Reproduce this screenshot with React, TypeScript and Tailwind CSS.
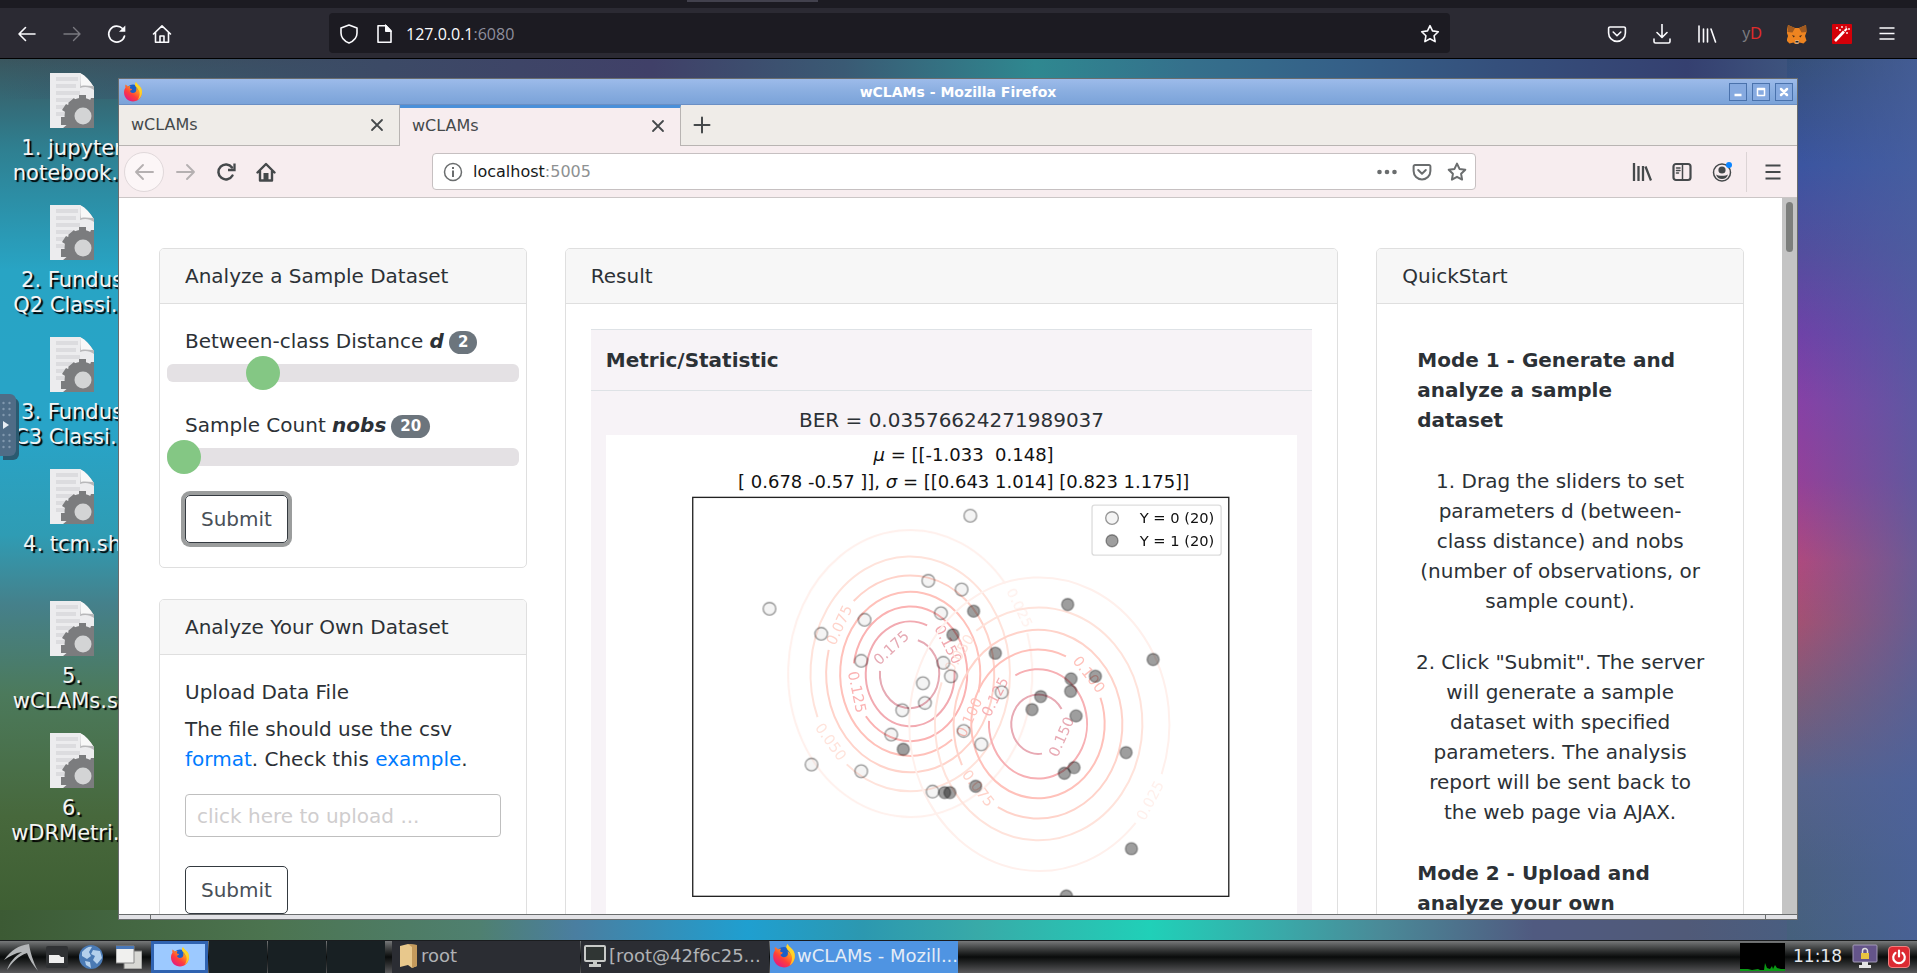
import React from "react";

type IconProps = { className?: string; children: React.ReactNode; box?: string };

function Icon({ className = "size-5", children, box = "0 0 20 20" }: IconProps) {
  return (
    <svg
      viewBox={box}
      className={className}
      fill="none"
      stroke="currentColor"
      strokeLinecap="round"
      strokeLinejoin="round"
      aria-hidden="true"
    >
      {children}
    </svg>
  );
}

const STAR = "M10 1.6l2.5 5.3 5.8.8-4.2 4.1 1 5.8-5.1-2.8-5.1 2.8 1-5.8-4.2-4.1 5.8-.8z";
const POCKET = "M3 3h14a1.4 1.4 0 0 1 1.4 1.4V9a8.4 8.4 0 0 1-16.8 0V4.4A1.4 1.4 0 0 1 3 3z";

function FirefoxLogo({ className, id }: { className: string; id: string }) {
  return (
    <svg viewBox="0 0 40 40" className={className} aria-hidden="true">
      <defs>
        <linearGradient id={id} x1="0.9" y1="0" x2="0.2" y2="1">
          <stop offset="0" stopColor="#ffe226" />
          <stop offset="0.35" stopColor="#ff9a1f" />
          <stop offset="0.65" stopColor="#ff3f3a" />
          <stop offset="1" stopColor="#e0158a" />
        </linearGradient>
      </defs>
      <circle cx="20" cy="19" r="14" fill="#1c5fc8" />
      <path
        d="M5 11c-1-3 0-6 0-6 2 1 4 3 5 4 2-1 4-1 5-1 0 1-2 3-1 5l4 1c0 2-3 3-4 4 1 4 6 5 10 3 3-2 3-6 2-9 3 1 5 4 5 8 0-8-5-10-7-14 0-3 1-4 2-6 2 6 12 8 12 20 0 11-8 19-18 19S2 31 2 21c0-4 1-7 3-10z"
        fill={`url(#${id})`}
      />
      <path d="M26 0c2 6 12 8 12 20 0 7-4 13-9 16 6-8 5-16 2-20-2-4-6-5-7-10 0-3 1-4 2-6z" fill="#ffdb29" opacity="0.85" />
    </svg>
  );
}

function FoxHead() {
  return (
    <svg viewBox="0 0 40 40" className="size-5" aria-hidden="true">
      <path d="M2 2l14 6h8l14-6 1 14-3 8 3 9-6 6-8-2-3 3h-6l-3-3-8 2-6-6 3-9-3-8z" fill="#ee8420" />
      <path d="M2 2l14 6-5 9-10-1zM38 2l-14 6 5 9 10-1z" fill="#a05a20" />
      <path d="M16 33h8l-1 6h-6z" fill="#d8c8b8" />
      <path d="M17 34h6v3h-6z" fill="#222" />
      <path d="M10 22l6 2-3 3zM30 22l-6 2 3 3z" fill="#4a2c18" />
    </svg>
  );
}

function BrowserBar() {
  return (
    <header className="shrink-0 border-b border-black bg-[#2b2a33] text-[#fbfbfe]">
      <div className="flex h-2 justify-center bg-[#1c1b22] pr-[412px]">
        <div className="h-0.5 w-[131px] bg-[#42414d]" />
      </div>
      <div className="flex h-[50px] items-center">
        <div className="flex w-[329px] shrink-0 items-center gap-[25px] pt-0.5 pl-[17px]">
          <button aria-label="Back" className="size-5">
            <Icon><path strokeWidth="1.6" d="M18 10H2M8.5 3.5L2 10l6.500 6.500" /></Icon>
          </button>
          <button aria-label="Forward" className="size-5 text-[#7a7980]">
            <Icon><path strokeWidth="1.4" d="M2 10h16M11.500 3.500L18 10l-6.500 6.500" /></Icon>
          </button>
          <button aria-label="Reload" className="size-5">
            <Icon>
              <path strokeWidth="1.7" d="M17.500 12a8 8 0 1 1-2-7.500" />
              <path d="M18.300 1.500v6.300h-6.300z" fill="currentColor" stroke="none" />
            </Icon>
          </button>
          <button aria-label="Home" className="size-5">
            <Icon><path strokeWidth="1.6" d="M1.500 10L10 1.800 18.500 10M3.500 8.500v9.700h13V8.500M8 18v-6h4v6" /></Icon>
          </button>
        </div>
        <div className="flex h-10 flex-1 items-center rounded bg-[#1c1b22] px-[10px] pt-0.5">
          <Icon className="size-5"><path strokeWidth="1.600" d="M10 1l8 3v5c0 4.500-3 8-8 10-5-2-8-5.500-8-10V4z" /></Icon>
          <Icon className="ml-[15px] size-5">
            <path strokeWidth="1.600" d="M4 1.800h8l5 5v11.400H4z" />
            <path d="M11.500 1v6.500H17z" fill="currentColor" />
          </Icon>
          <span className="ml-3 font-['Open_Sans',sans-serif] text-base">
            127.0.0.1<span className="text-[#8f8f9d]">:6080</span>
          </span>
          <button aria-label="Bookmark" className="ml-auto size-5">
            <Icon><path strokeWidth="1.600" d={STAR} /></Icon>
          </button>
        </div>
        <div className="flex w-[467px] shrink-0 items-center justify-end gap-[25px] pt-0.5 pr-5">
          <Icon><path strokeWidth="1.600" d={POCKET} /><path strokeWidth="1.600" d="M6.200 8l3.800 3.700L13.800 8" /></Icon>
          <Icon><path strokeWidth="1.600" d="M10 0v13M5 8.500l5 5 5-5M2 15v2.500A1.500 1.500 0 0 0 3.500 19h13a1.500 1.500 0 0 0 1.500-1.500V15" /></Icon>
          <Icon><path strokeWidth="1.600" d="M2 2v16M6.500 5v13M10.500 5v13M14 5l4.500 13" /></Icon>
          <span className="flex w-5 justify-center font-['Liberation_Sans',sans-serif] text-base text-[#7b7b80]">
            y<span className="text-[#e02b2b]">D</span>
          </span>
          <FoxHead />
          <svg viewBox="0 0 20 20" className="size-5" aria-hidden="true">
            <rect width="20" height="20" rx="1" fill="#d40008" />
            <path d="M3 17L12 7.500" stroke="#fff" strokeWidth="2.600" />
            <path d="M12.500 7l2.500-2.500" stroke="#fff" strokeWidth="2" />
            <g fill="#fff">
              <circle cx="5" cy="4" r="0.900" /><circle cx="8" cy="6" r="0.900" /><circle cx="10" cy="3" r="0.900" />
              <circle cx="14" cy="3" r="0.700" /><circle cx="17" cy="5" r="0.900" /><circle cx="15" cy="9" r="0.900" />
            </g>
          </svg>
          <button aria-label="Menu" className="size-5">
            <Icon><path strokeWidth="1.500" strokeLinecap="butt" d="M2.500 4h15M2.500 9.500h15M2.500 15h15" /></Icon>
          </button>
        </div>
      </div>
    </header>
  );
}

function ScriptFile({ lines }: { lines: string[] }) {
  return (
    <li className="flex h-[132px] flex-col items-center">
      <svg viewBox="0 0 44 55" className="h-[55px] w-11" aria-hidden="true">
        <path d="M0 0h30l14 14v41H0z" fill="#ececee" />
        <path d="M6 6h22M6 13h20M6 20h24M6 27h18M6 34h10M6 41h8" stroke="#dcdcdf" strokeWidth="4" />
        <path d="M30 0c1 5 1 9 0 15 5-2 10-1 14 2v-3C40 8 36 3 30 0z" fill="#b8b8ba" />
        <path d="M30 0c1 5 1 8 1 13 4-1 8 0 12 0C40 8 36 3 30 0z" fill="#f8f8f8" />
        <g fill="#7b7c7e">
          <path d="M18 30l6-5 5 6-5 6zM29 22h7v10h-7zM44 25v10l-6-3 3-7zM12 37l4-6 8 4-4 7zM11 44h9v8h-9zM13 55l6-5 6 5z" />
          <path d="M44 29.500V55H20a16 16 0 0 1 24-25.500z" />
        </g>
        <circle cx="33" cy="43" r="8.500" fill="#d3d4d5" />
      </svg>
      <span className="mt-2 text-center text-[21px] leading-[25px] whitespace-nowrap text-[#f4f4f4] [text-shadow:2px_2px_1px_#000]">
        {lines.map((line) => (
          <span key={line} className="block">{line}</span>
        ))}
      </span>
    </li>
  );
}

const FILES = [
  ["1. jupyter", "notebook..."],
  ["2. Fundus", "Q2 Classi..."],
  ["3. Fundus", "C3 Classi..."],
  ["4. tcm.sh"],
  ["5.", "wCLAMs.sh"],
  ["6.", "wDRMetri..."],
];

function TitleButton({ label, children }: { label: string; children: React.ReactNode }) {
  return (
    <button aria-label={label} className="grid size-[18px] place-items-center border border-[#4a72ac] bg-[#86aae0] text-white">
      <Icon className="size-3" box="0 0 12 12">{children}</Icon>
    </button>
  );
}

function Tab({ active }: { active?: boolean }) {
  return (
    <div
      className={
        active
          ? "-mb-px flex w-[281px] items-center justify-between border-t-3 border-r border-t-[#4a90d9] border-r-[#b8b4b2] bg-[#f7edef] pr-3 pb-[3px] pl-3"
          : "flex w-[281px] items-center justify-between border-r border-[#b8b4b2] pr-3 pl-3"
      }
    >
      <span className="text-base">wCLAMs</span>
      <button aria-label="Close tab">
        <Icon className="size-5"><path strokeWidth="1.800" d="M5 5l10 10M15 5L5 15" /></Icon>
      </button>
    </div>
  );
}

function WindowChrome() {
  return (
    <div className="shrink-0 text-[#45494b]">
      <div className="flex h-[26px] items-center border-b border-[#6b8fc4] bg-linear-to-b from-[#9dbbea] via-[#8aaee0] to-[#7ba3d9] px-1">
        <FirefoxLogo className="size-5" id="ff-title" />
        <span className="ml-11 flex-1 text-center text-sm font-bold text-white">wCLAMs - Mozilla Firefox</span>
        <div className="flex gap-[5px]">
          <TitleButton label="Minimize"><path strokeWidth="2.500" strokeLinecap="butt" d="M2.500 9h7" /></TitleButton>
          <TitleButton label="Maximize"><path strokeWidth="1.500" d="M2.500 2.500h7v7h-7zM2.500 3.500h7" /></TitleButton>
          <TitleButton label="Close"><path strokeWidth="2.500" d="M3 3l6 6M9 3L3 9" /></TitleButton>
        </div>
      </div>
      <div className="flex h-[41px] border-b border-[#b8b4b2] bg-[#efece8]">
        <Tab />
        <Tab active />
        <button aria-label="New tab" className="ml-[11px]">
          <Icon className="size-5"><path strokeWidth="2" d="M10 2.500v15M2.500 10h15" /></Icon>
        </button>
      </div>
      <div className="flex h-[52px] items-center border-b border-[#cbc6c6] bg-[#f7edef]">
        <div className="flex w-[313px] shrink-0 items-center pl-[5px]">
          <button aria-label="Back" className="grid size-10 place-items-center rounded-full border border-[#e0d8da] bg-[#fcf6f7] text-[#b5b0b1]">
            <Icon><path strokeWidth="1.900" d="M19 10H2M9 3l-7 7 7 7" /></Icon>
          </button>
          <button aria-label="Forward" className="ml-3 text-[#b5b0b1]">
            <Icon><path strokeWidth="1.900" d="M1 10h17M11 3l7 7-7 7" /></Icon>
          </button>
          <button aria-label="Reload" className="ml-5">
            <Icon>
              <path strokeWidth="2.500" d="M16.500 13.500a7.500 7.500 0 1 1-.5-8" />
              <path strokeWidth="2.300" strokeLinejoin="miter" strokeLinecap="butt" d="M18.500 1.500v6.500H12" />
            </Icon>
          </button>
          <button aria-label="Home" className="ml-5">
            <Icon>
              <path strokeWidth="2.400" d="M1.500 10.500L10 2l8.500 8.500M4 9v9.500h12V9" />
              <path d="M7.500 11h5v8h-5z" fill="currentColor" stroke="none" />
            </Icon>
          </button>
        </div>
        <div className="flex h-[37px] flex-1 items-center gap-[15px] rounded border border-[#c6c0c1] bg-white pr-2 pl-[10px] text-[#6a6d6e]">
          <div className="flex flex-1 items-center gap-[10px]">
            <Icon>
              <circle cx="10" cy="10" r="8.500" strokeWidth="1.500" />
              <path strokeWidth="2" strokeLinecap="butt" d="M10 8.500V15M10 5v2" />
            </Icon>
            <span className="text-base text-[#16191a]">localhost<span className="text-[#8e9192]">:5005</span></span>
          </div>
          <Icon>
            <g fill="currentColor" stroke="none"><circle cx="2.500" cy="10" r="2.300" /><circle cx="10" cy="10" r="2.300" /><circle cx="17.500" cy="10" r="2.300" /></g>
          </Icon>
          <Icon><path strokeWidth="2" d={POCKET} /><path strokeWidth="2" d="M6.200 8l3.800 3.700L13.800 8" /></Icon>
          <Icon><path strokeWidth="2" d={STAR} /></Icon>
        </div>
        <div className="flex w-[321px] shrink-0 items-center justify-end pr-[14px]">
          <Icon><path strokeWidth="2.300" strokeLinecap="butt" d="M2 1v18M6.500 4v15M11 4v15M13.500 4.500l5.500 14" /></Icon>
          <Icon className="ml-5 size-5">
            <rect x="1.500" y="2" width="17" height="16" rx="2.500" strokeWidth="2.200" />
            <path strokeWidth="1.500" d="M10.500 2v16M4.500 6h3.500M4.500 8.500h3.500M4.500 11h2" />
          </Icon>
          <Icon className="ml-5 size-5">
            <circle cx="10" cy="10.500" r="8.500" strokeWidth="1.500" />
            <circle cx="10" cy="8" r="3.600" fill="currentColor" stroke="none" />
            <path d="M4 12.500c2 1.800 10 1.800 12 0-1 3-3 4.500-6 4.500s-5-1.500-6-4.500z" fill="currentColor" stroke="none" />
            <circle cx="17" cy="3" r="3" fill="#0a84ff" stroke="none" />
          </Icon>
          <div className="ml-[14px] h-10 w-px bg-[#dcd4d5]" />
          <button aria-label="Menu" className="ml-4">
            <Icon><path strokeWidth="2.200" strokeLinecap="butt" d="M2.500 3.500h15M2.500 10h15M2.500 16.500h15" /></Icon>
          </button>
        </div>
      </div>
    </div>
  );
}

function Card({ title, children, className = "" }: { title: string; children: React.ReactNode; className?: string }) {
  return (
    <section className={`overflow-hidden rounded-[5px] border border-[#dfdfdf] bg-white ${className}`}>
      <h2 className="border-b border-[#dfdfdf] bg-[#f7f7f7] px-[25px] py-3">{title}</h2>
      {children}
    </section>
  );
}

function SliderField({ id, text, symbol, value, max, min }: { id: string; text: string; symbol: string; value: number; min: number; max: number }) {
  return (
    <div>
      <label htmlFor={id} className="flex items-center whitespace-pre">
        {text} <b className="italic">{symbol}</b>
        <span className="mt-0.5 ml-[5px] rounded-full bg-[#6c757d] px-[9px] text-[15px] leading-[23px] font-bold text-white">{value}</span>
      </label>
      <div className="-mx-[18px]">
        <input
          id={id}
          type="range"
          min={min}
          max={max}
          defaultValue={value}
          className="block h-[34px] w-full appearance-none bg-transparent [&::-webkit-slider-runnable-track]:h-[18px] [&::-webkit-slider-runnable-track]:rounded-md [&::-webkit-slider-runnable-track]:bg-[#e4e1e4] [&::-webkit-slider-thumb]:-mt-2 [&::-webkit-slider-thumb]:size-[34px] [&::-webkit-slider-thumb]:appearance-none [&::-webkit-slider-thumb]:rounded-full [&::-webkit-slider-thumb]:bg-[#84c784]"
        />
      </div>
    </div>
  );
}

const OPEN_POINTS = [
  [870, 110], [268, 389], [423, 464], [744, 305], [844, 331], [553, 422], [782, 402], [543, 545], [789, 551], [812, 591],
  [728, 612], [734, 671], [666, 693], [633, 766], [394, 856], [543, 876], [757, 937], [850, 755], [903, 795], [964, 639],
];
const SOLID_POINTS = [
  [880, 396], [818, 467], [945, 522], [669, 810], [886, 921], [793, 940], [809, 940], [1162, 376], [1172, 599], [1171, 636],
  [1081, 652], [1055, 691], [1187, 710], [1152, 882], [1181, 865], [1158, 1250], [1418, 541], [1245, 591], [1337, 820], [1353, 1108],
];

type Contour = {
  cx: number; cy: number; rx: number; ry: number; color: string;
  gap: [number, number, number, number];
  label: string; at: [number, number, number];
};

const CONTOURS: Contour[] = [
  { cx: 690, cy: 583, rx: 366, ry: 430, color: "#fff0ec", gap: [975, 312, 1047, 460], label: "0.025", at: [1020, 385, 64] },
  { cx: 690, cy: 584, rx: 299, ry: 352, color: "#ffe3db", gap: [500, 855, 412, 714], label: "0.050", at: [453, 787, 54] },
  { cx: 690, cy: 584, rx: 252, ry: 295, color: "#ffd3ca", gap: [445, 512, 520, 365], label: "0.075", at: [476, 437, -65] },
  { cx: 690, cy: 584, rx: 210, ry: 246, color: "#ffc1ba", gap: [897, 640, 815, 780], label: "0.100", at: [866, 714, -65] },
  { cx: 690, cy: 584, rx: 171, ry: 202, color: "#fbb2b2", gap: [556, 712, 519, 552], label: "0.125", at: [532, 638, 78] },
  { cx: 690, cy: 584, rx: 133, ry: 157, color: "#f2aab1", gap: [741, 438, 822, 575], label: "0.150", at: [805, 495, 62] },
  { cx: 688, cy: 583, rx: 89, ry: 104, color: "#e6aab4", gap: [600, 575, 713, 483], label: "0.175", at: [632, 505, -43] },
  { cx: 1077, cy: 735, rx: 390, ry: 440, color: "#fff0ec", gap: [1445, 885, 1365, 1030], label: "0.025", at: [1408, 963, -62] },
  { cx: 1075, cy: 734, rx: 311, ry: 349, color: "#ffe3db", gap: [785, 610, 888, 455], label: "0.050", at: [836, 522, -58] },
  { cx: 1073, cy: 735, rx: 253, ry: 283, color: "#ffd3ca", gap: [952, 985, 845, 858], label: "0.075", at: [895, 926, 52] },
  { cx: 1073, cy: 734, rx: 200, ry: 223, color: "#ffc1ba", gap: [1157, 531, 1262, 655], label: "0.100", at: [1227, 585, 52] },
  { cx: 1073, cy: 734, rx: 147, ry: 164, color: "#f7b0b4", gap: [925, 725, 1005, 588], label: "0.125", at: [943, 652, -63] },
  { cx: 1074, cy: 735, rx: 81, ry: 89, color: "#e8aab4", gap: [1143, 690, 1085, 823], label: "0.150", at: [1142, 772, -66] },
];

function contourPath({ cx, cy, rx, ry, gap }: Contour): string {
  const angle = (x: number, y: number) => Math.atan2((y - cy) / ry, (x - cx) / rx);
  const from = angle(gap[2], gap[3]);
  let to = angle(gap[0], gap[1]);
  while (to < from) to += Math.PI * 2;
  const point = (a: number) => `${cx + rx * Math.cos(a)} ${cy + ry * Math.sin(a)}`;
  return `M${point(from)}A${rx} ${ry} 0 ${to - from > Math.PI ? 1 : 0} 1 ${point(to)}`;
}

function ScatterPlot() {
  return (
    <svg viewBox="-222 -132 2073 1480" className="block h-auto w-full bg-white font-['DejaVu_Sans',sans-serif]" role="img" aria-label="Sample distribution">
      <g fontSize="54" textAnchor="middle" fill="#111">
        <text x="850" y="-54"><tspan fontStyle="italic">μ</tspan> = [[-1.033{"\u00a0\u00a0"}0.148]</text>
        <text x="850" y="26">[ 0.678 -0.57 ]], <tspan fontStyle="italic">σ</tspan> = [[0.643 1.014] [0.823 1.175]]</text>
      </g>
      <clipPath id="axes"><rect x="38" y="55" width="1607" height="1196" /></clipPath>
      <g clipPath="url(#axes)">
        <g fill="#777" fillOpacity="0.08" stroke="#000" strokeOpacity="0.4" strokeWidth="4">
          {OPEN_POINTS.map(([x, y]) => <circle key={`${x}-${y}`} cx={x} cy={y} r="19" />)}
        </g>
        <g fill="#000" fillOpacity="0.38" stroke="#000" strokeOpacity="0.36" strokeWidth="4">
          {SOLID_POINTS.map(([x, y]) => <circle key={`${x}-${y}`} cx={x} cy={y} r="18" />)}
        </g>
        <g className="mix-blend-multiply">
          {CONTOURS.map((c) => (
            <g key={`${c.cx}-${c.rx}`}>
              <path d={contourPath(c)} fill="none" stroke={c.color} strokeWidth="6" />
              <text
                x={c.at[0]}
                y={c.at[1]}
                transform={`rotate(${c.at[2]} ${c.at[0]} ${c.at[1]})`}
                fontSize="44"
                textAnchor="middle"
                dominantBaseline="central"
                fill={c.color}
              >
                {c.label}
              </text>
            </g>
          ))}
        </g>
      </g>
      <rect x="38" y="55" width="1607" height="1196" fill="none" stroke="#222" strokeWidth="4" />
      <rect x="1235" y="78" width="387" height="150" rx="8" fill="#fff" stroke="#ddd" strokeWidth="4" />
      <circle cx="1295" cy="117" r="19" fill="#777" fillOpacity="0.08" stroke="#000" strokeOpacity="0.4" strokeWidth="4" />
      <circle cx="1295" cy="185" r="18" fill="#000" fillOpacity="0.38" stroke="#000" strokeOpacity="0.36" strokeWidth="4" />
      <g fontSize="44" fill="#111">
        <text x="1378" y="132">Y = 0 (20)</text>
        <text x="1378" y="200">Y = 1 (20)</text>
      </g>
    </svg>
  );
}

function Page() {
  return (
    <div className="flex min-h-0 flex-1">
      <main className="min-h-0 flex-1 overflow-hidden bg-white pt-[50px] pr-[38px] pl-10 text-xl leading-[30px] text-[#2c3136]">
        <div className="grid grid-cols-4 items-start gap-x-[38px]">
          <div className="flex flex-col gap-[31px]">
            <Card title="Analyze a Sample Dataset">
              <form className="flex flex-col gap-5 px-[25px] pt-[22px] pb-6" onSubmit={(e) => e.preventDefault()}>
                <SliderField id="distance" text="Between-class Distance" symbol="d" value={2} min={0} max={8} />
                <SliderField id="nobs" text="Sample Count" symbol="nobs" value={20} min={20} max={200} />
                <button className="mt-px h-12 self-start rounded-[5px] border border-[#343a40] px-[15px] text-[#495057] ring-4 ring-[#9b9d9d]">
                  Submit
                </button>
              </form>
            </Card>
            <Card title="Analyze Your Own Dataset">
              <form className="flex flex-col px-[25px] pt-[22px] pb-6" onSubmit={(e) => e.preventDefault()}>
                <label htmlFor="upload">Upload Data File</label>
                <p className="mt-[7px]">
                  The file should use the csv <a href="#format" className="text-[#007bff]">format</a>. Check this{" "}
                  <a href="#example" className="text-[#007bff]">example</a>.
                </p>
                <input
                  id="upload"
                  type="text"
                  placeholder="click here to upload ..."
                  className="mt-5 h-[43px] w-full rounded-[4px] border border-[#bfbfbf] px-[11px] placeholder:text-[#cfcdce]"
                />
                <button className="mt-[29px] h-12 self-start rounded-[5px] border border-[#343a40] px-[15px] text-[#495057]">Submit</button>
              </form>
            </Card>
          </div>
          <Card title="Result" className="col-span-2">
            <div className="p-[25px]">
              <table className="w-full bg-[#f7f3f7]">
                <thead>
                  <tr className="border-y border-[#dee2e6]">
                    <th className="px-[15px] py-[15px] text-left font-bold">Metric/Statistic</th>
                  </tr>
                </thead>
                <tbody>
                  <tr>
                    <td className="px-[15px] pt-[14px] pb-[15px] text-center">
                      <p>BER = 0.03576624271989037</p>
                      <ScatterPlot />
                    </td>
                  </tr>
                </tbody>
              </table>
            </div>
          </Card>
          <Card title="QuickStart">
            <div className="flex flex-col gap-[31px] px-[38px] pt-[41px] pb-6">
              <h3 className="px-[2px] font-bold">Mode 1 - Generate and analyze a sample dataset</h3>
              <p className="text-center">
                1. Drag the sliders to set parameters d (between-class distance) and nobs (number of observations, or sample count).
              </p>
              <p className="text-center">
                2. Click "Submit". The server will generate a sample dataset with specified parameters. The analysis report will be sent back to the web page via AJAX.
              </p>
              <h3 className="px-[2px] font-bold">Mode 2 - Upload and analyze your own dataset</h3>
            </div>
          </Card>
        </div>
      </main>
      <div className="w-[15px] shrink-0 bg-[#c4c4c4] px-[4px] pt-1">
        <div className="h-[50px] rounded-full bg-[#7c7e7c]" />
      </div>
    </div>
  );
}

function Desktop() {
  return (
    <div className="relative flex min-h-0 flex-1 flex-col overflow-hidden bg-[#46658a] bg-[linear-gradient(90deg,#4a62a000_0%,#4a62a0b0_100%),linear-gradient(180deg,#354f78_0%,#3a54a0_12%,#544c9e_22%,#7040a8_31%,#8a3fa6_39%,#983f98_48%,#b4487c_57%,#a85070_64%,#7c5c78_73%,#56628a_82%,#4a6080_92%,#45607c_100%),linear-gradient(90deg,#3c5a34_0%,#4c7450_14%,#4f8070_25%,#4a7ea0_30%,#1f9fd0_39%,#2c98b0_45%,#38aaa8_51%,#20d0b8_60%,#3aa8a8_67%,#4a8a98_72%,#505a80_80%,#505a78_88%,#41628a_100%),linear-gradient(90deg,transparent_0%,#3c4a66_20%,#404068_34%,#3a5a74_44%,#2f8890_54%,#35708c_62%,#356088_70%,#35507c_78%,#354070_88%,transparent_98%),linear-gradient(180deg,#3a565e_0%,#2f7f90_10%,#28a4c4_24%,#28a4c8_42%,#2f9cb4_54%,#45808a_62%,#4c7a5c_72%,#47683c_86%,#3c5c30_100%)] bg-[length:130px_100%,130px_100%,100%_30px,100%_40px,700px_100%] bg-[position:100%_0,100%_0,0_100%,0_0,0_0] bg-no-repeat">
      <ul className="absolute top-[14px] left-0 w-36">
        {FILES.map((lines) => <ScriptFile key={lines.join(" ")} lines={lines} />)}
      </ul>
      <div className="relative mt-[19px] mr-[119px] mb-5 ml-[118px] flex min-h-0 flex-1 flex-col border border-[#6a6d6e]">
        <WindowChrome />
        <Page />
        <div className="flex h-[5px] shrink-0 border-t border-[#6a6d6e] bg-[#e2e2e6]">
          <div className="w-8 border-r border-[#6a6d6e]" />
          <div className="flex-1" />
          <div className="w-8 border-l border-[#6a6d6e]" />
        </div>
      </div>
      <button
        aria-label="Open control bar"
        className="absolute top-[335px] left-0 h-[62px] w-4 rounded-r-md bg-[#4f6c86] text-[#e8eef4] shadow-[3px_4px_0_#2a5a70]"
      >
        <svg viewBox="0 0 16 62" className="h-full w-full" aria-hidden="true">
          <g fill="#8098ae">
            {[9, 15, 21, 41, 47, 53].map((y) => (
              <React.Fragment key={y}>
                <circle cx="3.500" cy={y} r="1.200" />
                <circle cx="9.500" cy={y} r="1.200" />
              </React.Fragment>
            ))}
          </g>
          <path d="M3 27v8l6-4z" fill="currentColor" />
        </svg>
      </button>
    </div>
  );
}

function Taskbar() {
  return (
    <footer className="flex h-[33px] shrink-0 items-center border-t border-[#1a1c1e] bg-linear-to-b from-[#77797a] via-[#0a0c0c] to-[#5a5a5c] text-lg whitespace-nowrap text-[#b0b2b5]">
      <div className="flex w-[151px] shrink-0 items-center pl-1">
        <svg viewBox="0 0 34 28" className="h-7 w-[34px]" aria-hidden="true">
          <path d="M0 17C8 6 14 3 25 1c1 7 4 18 9 27-5-6-9-12-11-18C14 13 8 20 3 27c2-7 8-14 15-18C11 10 6 13 0 17z" fill="#b4b6b8" />
        </svg>
        <svg viewBox="0 0 22 22" className="ml-2 size-[22px]" aria-hidden="true">
          <rect width="22" height="22" rx="2" fill="#303234" />
          <path d="M3 9h10l2 2h3v6H3z" fill="#eee" />
        </svg>
        <svg viewBox="0 0 26 26" className="ml-2.5 size-[26px]" aria-hidden="true">
          <circle cx="13" cy="13" r="12" fill="#4a7ab4" />
          <path d="M4 8c4-5 8-6 10-5l-3 5 2 4-4 3-5-3zM15 6l7 1 2 7-5 6-4-4 2-4-4-2zM7 17l5 1 1 6-5-3z" fill="#b4d0ec" />
        </svg>
        <svg viewBox="0 0 26 24" className="ml-3 h-6 w-[26px]" aria-hidden="true">
          <path d="M8 6h18v18H8z" fill="#d8d8d4" stroke="#777" />
          <path d="M0 1h18v17H0z" fill="#f0f0ee" stroke="#888" />
          <path d="M0 1h18v3H0z" fill="#4a78b8" />
        </svg>
      </div>
      <div className="flex h-full shrink-0 gap-px">
        <button aria-label="Desktop 1" className="grid w-[57px] place-items-center border-3 border-[#2f62b0] bg-[#9cc9ff]">
          <FirefoxLogo className="size-5" id="ff-pager" />
        </button>
        <button aria-label="Desktop 2" className="w-[58px] bg-[#182023]" />
        <button aria-label="Desktop 3" className="w-[58px] bg-[#182023]" />
        <button aria-label="Desktop 4" className="w-[58px] bg-[#182023]" />
      </div>
      <div className="ml-[7px] flex h-full shrink-0 gap-px">
        <button className="flex w-[188px] items-center gap-1 bg-[#2b2d33] pb-0.5 pl-2">
          <svg viewBox="0 0 17 26" className="h-[26px] w-[17px]" aria-hidden="true">
            <path d="M0 3l8-2 9 1v21l-5 2-4-3-8 2z" fill="#e8c88c" />
            <path d="M8 1l4 3v21l5-2V2z" fill="#c49a5c" />
          </svg>
          root
        </button>
        <button className="flex w-[188px] items-center gap-[3px] bg-[#2b2d33] pb-0.5 pl-[3px]">
          <svg viewBox="0 0 22 22" className="size-[22px]" aria-hidden="true">
            <rect x="1" y="1" width="20" height="15" rx="1" fill="#303634" stroke="#c8cac8" strokeWidth="2" />
            <path d="M9 16h4v3h4v3H5v-3h4z" fill="#c8cac8" />
          </svg>
          [root@42f6c25...
        </button>
        <button className="flex w-[188px] items-center gap-px bg-[#4f94e2] pb-0.5 pl-[2px] text-[#e4ecf6]">
          <FirefoxLogo className="size-6 shrink-0" id="ff-task" />
          wCLAMs - Mozill...
        </button>
      </div>
      <div className="ml-auto flex items-center pr-[7px]">
        <svg viewBox="0 0 45 28" className="h-7 w-[45px] bg-black" aria-hidden="true">
          <path d="M0 28v-2h8l4 1 6-1 2 1h4l1-7 2 5 3 1 2-3 1 3 2-4 2 3 4 1h4v2z" fill="#0a9a14" />
        </svg>
        <time className="ml-2 pb-0.5 text-[17px] text-[#e4e8ec]">11:18</time>
        <svg viewBox="0 0 26 26" className="ml-2.5 size-[26px]" aria-hidden="true">
          <rect x="1" y="1" width="24" height="17" rx="1" fill="#64548a" stroke="#a49cb8" />
          <path d="M10 18h6v3h3v3H7v-3h3z" fill="#e4e4e4" />
          <path d="M10.500 9V7a2.500 2.500 0 0 1 5 0v2" fill="none" stroke="#ddd" strokeWidth="1.500" />
          <rect x="9" y="9" width="8" height="6" fill="#e8c440" />
        </svg>
        <button aria-label="Log out" className="ml-2.5 grid size-[22px] place-items-center rounded-sm border border-[#f08080] bg-[#dc2a32] text-white">
          <Icon className="size-4" box="0 0 16 16"><path strokeWidth="2.200" d="M8 1.500v6M4.500 3.800a5.800 5.800 0 1 0 7 0" /></Icon>
        </button>
      </div>
    </footer>
  );
}

export default function App() {
  return (
    <div className="flex h-screen flex-col overflow-hidden font-['DejaVu_Sans',sans-serif]">
      <BrowserBar />
      <Desktop />
      <Taskbar />
    </div>
  );
}
